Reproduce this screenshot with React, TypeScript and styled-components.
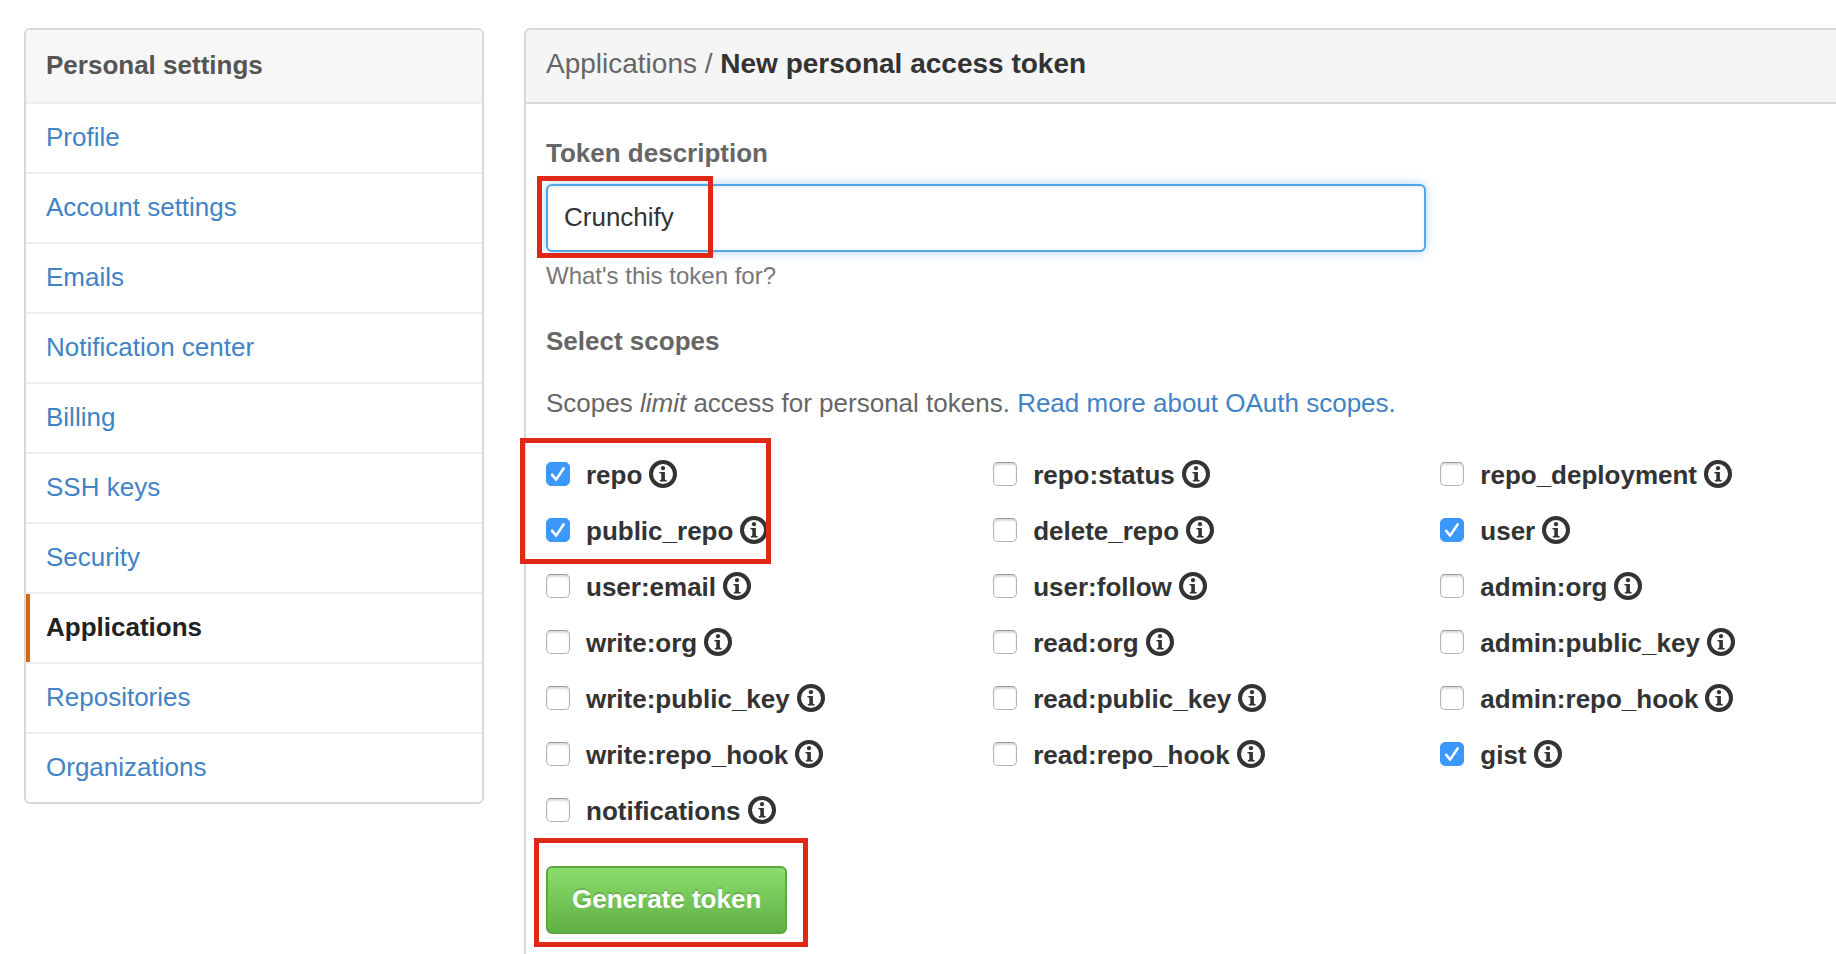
import React from "react";
import styled, { createGlobalStyle } from "styled-components";

const GlobalStyle = createGlobalStyle`
  *, *::before, *::after { box-sizing: border-box; }
  body {
    margin: 0;
    overflow-x: hidden;
    background: #fff;
    color: #666;
    font: 26px/36px "Liberation Sans", Helvetica, Arial, sans-serif;
  }
`;

const Page = styled.div`
  display: flex;
  align-items: stretch;
  gap: 40px;
  min-height: 100vh;
  padding: 28px 0 0 24px;
`;

const Menu = styled.nav`
  flex: 0 0 460px;
  align-self: flex-start;
  border: 2px solid #d8d8d8;
  border-radius: 6px;
  overflow: hidden;
`;

const MenuHeading = styled.h2`
  margin: 0;
  padding: 17px 20px 19px;
  background: #f7f7f7;
  border-bottom: 2px solid #eee;
  color: #555;
  font-size: 26px;
  line-height: 36px;
`;

const MenuList = styled.ul`
  margin: 0;
  padding: 0;
  list-style: none;
`;

const MenuItem = styled.li`
  & + & {
    border-top: 2px solid #eee;
  }
`;

const MenuLink = styled.a<{ $current?: boolean }>`
  display: block;
  padding: 15px 20px 17px ${(p) => (p.$current ? 16 : 20)}px;
  border-left: ${(p) => (p.$current ? "4px solid #d26911" : "0")};
  color: ${(p) => (p.$current ? "#222" : "#4183c4")};
  font-weight: ${(p) => (p.$current ? "bold" : "normal")};
  text-decoration: none;
`;

const Panel = styled.main`
  flex: 1;
  min-width: 0;
  border: 2px solid #d8d8d8;
  border-width: 2px 0 0 2px;
  border-top-left-radius: 6px;
`;

const PanelHeading = styled.h1`
  margin: 0;
  padding: 16px 20px 20px;
  background: #f5f5f5;
  border-bottom: 2px solid #d8d8d8;
  border-top-left-radius: 4px;
  color: #666;
  font-size: 28px;
  font-weight: normal;
  line-height: 36px;

  strong {
    color: #333;
  }
`;

const TokenForm = styled.form`
  padding: 31px 0 20px 20px;
`;

const FieldLabel = styled.label`
  display: block;
  font-weight: bold;
`;

const Highlighted = styled.div`
  position: relative;
`;

const Outline = styled.span<{ $top: number; $left: number; $width: number; $height: number }>`
  position: absolute;
  top: ${(p) => p.$top}px;
  left: ${(p) => p.$left}px;
  width: ${(p) => p.$width}px;
  height: ${(p) => p.$height}px;
  border: 5px solid #e12718;
  pointer-events: none;
`;

const TextInput = styled.input`
  display: block;
  width: 100%;
  max-width: 880px;
  height: 68px;
  margin-top: 13px;
  padding: 0 16px 2px;
  border: 2px solid #51a7e8;
  border-radius: 6px;
  outline: none;
  background: #fff;
  box-shadow: inset 0 2px 4px rgba(0, 0, 0, 0.075), 0 0 10px rgba(81, 167, 232, 0.5);
  color: #333;
  font: inherit;
`;

const Hint = styled.p`
  margin: 6px 0 0;
  color: #777;
  font-size: 24px;
  line-height: 36px;
`;

const SectionTitle = styled.h3`
  margin: 29px 0 0;
  font-size: 26px;
  line-height: 36px;
`;

const Intro = styled.p`
  margin: 26px 0 0;

  a {
    color: #4183c4;
    text-decoration: none;
  }
`;

const ScopeGrid = styled.div`
  display: grid;
  grid-template-columns: 9fr 9fr 8fr;
  grid-auto-rows: 56px;
  column-gap: 2px;
  align-items: center;
  margin-top: 25px;
`;

const Scope = styled.label`
  display: flex;
  align-items: center;
  color: #333;
  font-weight: bold;
  white-space: nowrap;
`;

const ScopeName = styled.span`
  padding-top: 2px;
`;

const Tick = styled.span`
  position: relative;
  display: flex;
  margin-right: 16px;

  svg {
    position: absolute;
    inset: 0;
    pointer-events: none;
  }
`;

const Checkbox = styled.input`
  appearance: none;
  width: 24px;
  height: 24px;
  margin: 0;
  border: 1px solid #b4b4b4;
  border-top-color: #999;
  border-radius: 5px;
  background: #fff;
  box-shadow: inset 0 2px 2px rgba(0, 0, 0, 0.14);

  & + svg {
    display: none;
  }

  &:checked {
    border-color: #3b99fc;
    background: #3b99fc;
    box-shadow: none;
  }

  &:checked + svg {
    display: block;
  }
`;

const InfoSvg = styled.svg`
  flex: none;
  margin-left: 7px;
`;

const SubmitButton = styled.button`
  display: block;
  height: 68px;
  margin-top: 28px;
  padding: 0 24px 2px;
  border: 2px solid #5ca941;
  border-radius: 6px;
  background: linear-gradient(#8add6d, #60b044);
  color: #fff;
  font: bold 26px/36px "Liberation Sans", Helvetica, Arial, sans-serif;
  text-shadow: 0 -2px 0 rgba(0, 0, 0, 0.15);
`;

const menu = [
  "Profile",
  "Account settings",
  "Emails",
  "Notification center",
  "Billing",
  "SSH keys",
  "Security",
  "Applications",
  "Repositories",
  "Organizations",
];

const scopes = [
  "repo",
  "repo:status",
  "repo_deployment",
  "public_repo",
  "delete_repo",
  "user",
  "user:email",
  "user:follow",
  "admin:org",
  "write:org",
  "read:org",
  "admin:public_key",
  "write:public_key",
  "read:public_key",
  "admin:repo_hook",
  "write:repo_hook",
  "read:repo_hook",
  "gist",
  "notifications",
];

const granted = ["repo", "public_repo", "user", "gist"];

const InfoIcon = () => (
  <InfoSvg width="28" height="28" viewBox="0 0 28 28" aria-hidden="true">
    <circle cx="14" cy="14" r="12" fill="none" stroke="#333" strokeWidth="4" />
    <circle cx="14" cy="8.2" r="2.1" fill="#333" />
    <path d="M10.4 12H15.9V18.8C15.9 19.9 16.2 20.1 17.7 20.2V21.4H10.8V20.2C12 20.1 12.3 19.9 12.3 18.8V14.6C12.3 13.7 12 13.4 10.4 13.3Z" fill="#333" />
  </InfoSvg>
);

const ScopeOption = ({ name }: { name: string }) => (
  <Scope>
    <Tick>
      <Checkbox type="checkbox" name={name} defaultChecked={granted.includes(name)} />
      <svg width="24" height="24" viewBox="0 0 24 24" aria-hidden="true">
        <path d="M6.2 12.8 10.2 17.6 17.6 6.4" fill="none" stroke="#fff" strokeWidth="2.6" strokeLinecap="round" strokeLinejoin="round" />
      </svg>
    </Tick>
    <ScopeName>{name}</ScopeName>
    <InfoIcon />
  </Scope>
);

export default function App() {
  return (
    <>
      <GlobalStyle />
      <Page>
        <Menu>
          <MenuHeading>Personal settings</MenuHeading>
          <MenuList>
            {menu.map((item) => (
              <MenuItem key={item}>
                <MenuLink href="#" $current={item === "Applications"}>
                  {item}
                </MenuLink>
              </MenuItem>
            ))}
          </MenuList>
        </Menu>
        <Panel>
          <PanelHeading>
            Applications / <strong>New personal access token</strong>
          </PanelHeading>
          <TokenForm onSubmit={(e) => e.preventDefault()}>
            <FieldLabel htmlFor="description">Token description</FieldLabel>
            <Highlighted>
              <TextInput id="description" type="text" defaultValue="Crunchify" />
              <Outline $top={-8} $left={-9} $width={176} $height={82} />
            </Highlighted>
            <Hint>What's this token for?</Hint>
            <SectionTitle>Select scopes</SectionTitle>
            <Intro>
              Scopes <em>limit</em> access for personal tokens. <a href="#">Read more about OAuth scopes.</a>
            </Intro>
            <Highlighted>
              <ScopeGrid>
                {scopes.map((name) => (
                  <ScopeOption key={name} name={name} />
                ))}
              </ScopeGrid>
              <Outline $top={-8} $left={-26} $width={251} $height={126} />
            </Highlighted>
            <Highlighted>
              <SubmitButton type="submit">Generate token</SubmitButton>
              <Outline $top={-28} $left={-12} $width={274} $height={109} />
            </Highlighted>
          </TokenForm>
        </Panel>
      </Page>
    </>
  );
}
